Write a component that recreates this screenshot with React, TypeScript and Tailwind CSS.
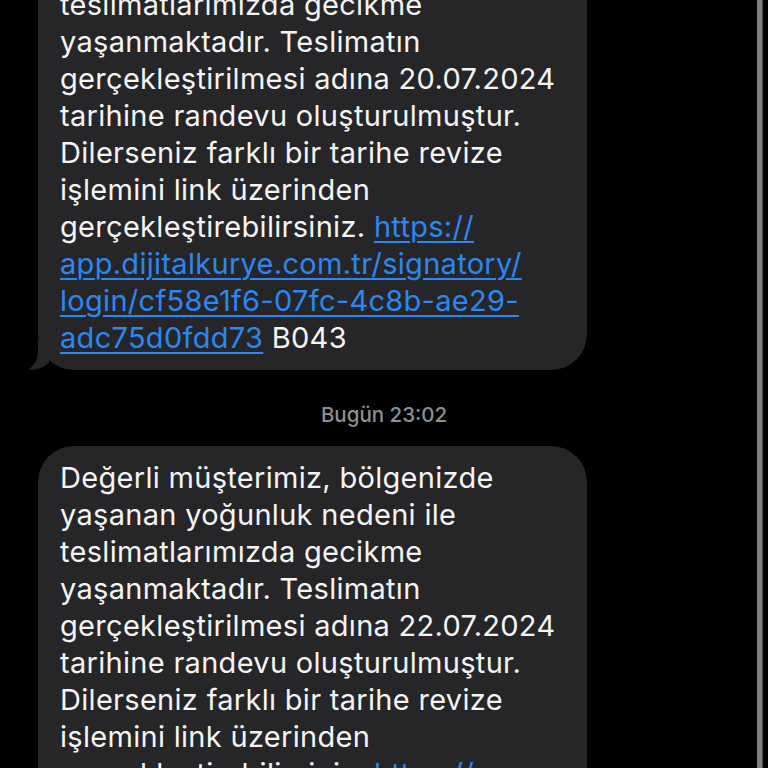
import React from "react";

const Tail = () => (
  <svg
    className="absolute left-[-10px] bottom-0"
    width="40"
    height="30"
    viewBox="0 0 40 30"
  >
    <path
      d="M10 0 L10 12 C10 20 5.5 26.5 0 29.6 C8 30.4 15 28 21 22.5 L21 0 Z"
      fill="#262628"
    />
  </svg>
);

type Part = { t: string; link?: boolean };

const Bubble = ({ lines, tail }: { lines: Part[][]; tail?: boolean }) => (
  <div className="relative ml-[38px] w-[549px] rounded-[36px] bg-[#262628] px-[22px] pt-[13px] pb-[14px]">
    {lines.map((parts, i) => (
      <div key={i} className="h-[37px] leading-[37px] whitespace-nowrap">
        {parts.map((p, j) =>
          p.link ? (
            <span
              key={j}
              className="text-[#2b87f2] underline decoration-[2px] underline-offset-[4px]"
            >
              {p.t}
            </span>
          ) : (
            <span key={j}>{p.t}</span>
          )
        )}
      </div>
    ))}
    {tail && <Tail />}
  </div>
);

const common = (date: string): Part[][] => [
  [{ t: "Değerli müşterimiz, bölgenizde" }],
  [{ t: "yaşanan yoğunluk nedeni ile" }],
  [{ t: "teslimatlarımızda gecikme" }],
  [{ t: "yaşanmaktadır. Teslimatın" }],
  [{ t: `gerçekleştirilmesi adına ${date}` }],
  [{ t: "tarihine randevu oluşturulmuştur." }],
  [{ t: "Dilerseniz farklı bir tarihe revize" }],
  [{ t: "işlemini link üzerinden" }],
  [{ t: "gerçekleştirebilirsiniz. " }, { t: "https://", link: true }],
  [{ t: "app.dijitalkurye.com.tr/signatory/", link: true }],
  [{ t: "login/cf58e1f6-07fc-4c8b-ae29-", link: true }],
  [{ t: "adc75d0fdd73", link: true }, { t: " B043" }],
];

export default function App() {
  return (
    <div
      className="relative h-[768px] w-[768px] overflow-hidden bg-black text-[29px] tracking-[0.3px] text-[#f4f4f5]"
      style={{ fontFamily: "Inter, 'Noto Sans', sans-serif" }}
    >
      <div className="mt-[-101px] flex flex-col">
        <Bubble lines={common("20.07.2024")} tail />
        <div className="flex h-[76px] items-start justify-center pt-[33px] text-[20.5px] leading-[24px] tracking-normal font-medium text-[#8e8e93]">
          <span className="ml-[0px]">Bugün 23:02</span>
        </div>
        <Bubble lines={common("22.07.2024")} />
      </div>
      <div className="absolute right-[6px] top-0 h-full w-[5px] bg-[#7f7f7f]" />
      <div className="absolute right-[5px] top-0 h-full w-[1px] bg-[#4a4a4a]" />
    </div>
  );
}
